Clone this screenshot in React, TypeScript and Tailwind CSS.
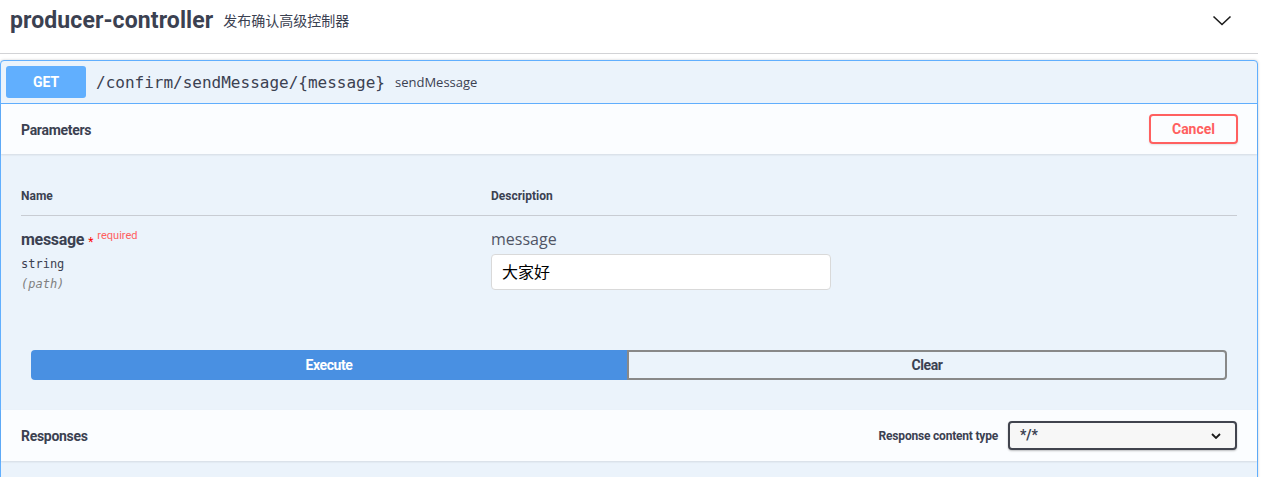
const sans = "font-['Roboto','Noto_Sans_CJK_SC',sans-serif]"
const mono = "font-['DejaVu_Sans_Mono','Liberation_Mono',monospace]"
const open = "font-['Open_Sans','Noto_Sans_CJK_SC',sans-serif]"

function Chevron({ className }: { className?: string }) {
  return (
    <svg viewBox="0 0 20 11" className={className} fill="none" stroke="currentColor">
      <path d="M1.5 1.5 L10 9.5 L18.5 1.5" strokeWidth="1.6" />
    </svg>
  )
}

export default function App() {
  return (
    <div className={`min-h-[477px] bg-white text-[#3b4151] ${sans}`}>
      <div className="w-[1258px]">
        {/* tag header */}
        <div className="flex h-[54px] items-start justify-between border-b border-[#d2d3d6] pl-[10px] pr-[26px] pt-[7px]">
          <div className="flex items-center">
            <span className="text-[23px] font-bold leading-[28px] tracking-[0.1px]">producer-controller</span>
            <span className="ml-[10px] text-[14px] leading-[28px] text-[#3b4151]">发布确认高级控制器</span>
          </div>
          <Chevron className="mt-[8px] h-[11px] w-[20px] text-[#1b1b1b]" />
        </div>

        {/* operation block */}
        <div className="mt-[6px] rounded-[4px] border border-[#61affe] bg-[#ebf3fb] shadow-[0_0_3px_rgba(0,0,0,0.19)]">
          <div className="flex items-center border-b border-[#61affe] p-[5px]">
            <div className="flex h-[32px] w-[80px] items-center justify-center rounded-[3px] bg-[#61affe] text-[14px] font-bold text-white">
              GET
            </div>
            <span className={`ml-[10px] pt-[2px] text-[16px] ${mono}`}>/confirm/sendMessage/&#123;message&#125;</span>
            <span className={`ml-[10px] pt-[2px] text-[13px] ${open}`}>sendMessage</span>
          </div>

          <div className="flex h-[50px] items-center justify-between bg-[#fbfdff] px-[19px] shadow-[0_1px_2px_rgba(0,0,0,0.1)]">
            <span className="pl-[1px] pt-[2px] text-[14px] font-bold tracking-[-0.3px]">Parameters</span>
            <button className="h-[30px] w-[89px] rounded-[4px] border-2 border-[#ff6060] text-[14px] font-bold text-[#ff6060] shadow-[0_1px_2px_rgba(0,0,0,0.1)]">
              Cancel
            </button>
          </div>

          <div className="px-[20px] pt-[21px]">
            <div className="flex h-[41px] items-center border-b border-[#c8ccd3] pt-[1px] text-[12px] font-bold">
              <div className="w-[470px]">Name</div>
              <div>Description</div>
            </div>
            <div className="flex pt-[13px]">
              <div className="w-[470px]">
                <div className="flex items-start">
                  <span className="text-[16px] font-bold leading-[22px] tracking-[-0.3px]">message</span>
                  <span className="ml-[4px] mt-[4px] text-[12px] text-[#ff0000]">*</span>
                  <span className="ml-[4px] text-[11px] leading-[14px] text-[#ff6060]">required</span>
                </div>
                <div className={`mt-[3px] text-[12px] leading-[20px] ${mono}`}>string</div>
                <div className={`text-[12px] italic leading-[20px] text-[#808080] ${mono}`}>(path)</div>
              </div>
              <div>
                <div className={`text-[16px] leading-[20px] text-[#505565] ${open}`}>message</div>
                <div className={`mt-[5px] flex h-[36px] w-[340px] items-center rounded-[4px] border border-[#d9d9d9] bg-white px-[10px] text-[16px] text-black ${open}`}>
                  大家好
                </div>
              </div>
            </div>
          </div>

          <div className="flex px-[30px] pt-[56px]">
            <button className="h-[30px] flex-1 rounded-l-[4px] bg-[#4990e2] text-[14px] font-bold tracking-[-0.4px] text-white">
              Execute
            </button>
            <button className="h-[30px] flex-1 rounded-r-[4px] border-2 border-[#888888] text-[14px] font-bold tracking-[-0.4px]">
              Clear
            </button>
          </div>

          <div className="mt-[30px] flex h-[51px] items-center justify-between bg-[#fbfdff] px-[20px] shadow-[0_1px_2px_rgba(0,0,0,0.1)]">
            <span className="pt-[1px] text-[14px] font-bold tracking-[-0.3px]">Responses</span>
            <div className="flex items-center">
              <span className="mr-[10px] pt-[1px] text-[12px] font-bold tracking-[-0.2px]">Response content type</span>
              <div className="flex h-[29px] w-[229px] items-center justify-between rounded-[4px] border-2 border-[#41444e] bg-[#f7f7f7] pl-[10px] pr-[14px] shadow-[0_1px_2px_rgba(0,0,0,0.25)]">
                <span className="text-[14px] font-bold">*/*</span>
                <svg viewBox="0 0 10 6" className="h-[6px] w-[10px]" fill="none" stroke="#1b1b1b">
                  <path d="M1 1 L5 5 L9 1" strokeWidth="1.8" />
                </svg>
              </div>
            </div>
          </div>
          <div className="h-[20px]" />
        </div>
      </div>
    </div>
  )
}
